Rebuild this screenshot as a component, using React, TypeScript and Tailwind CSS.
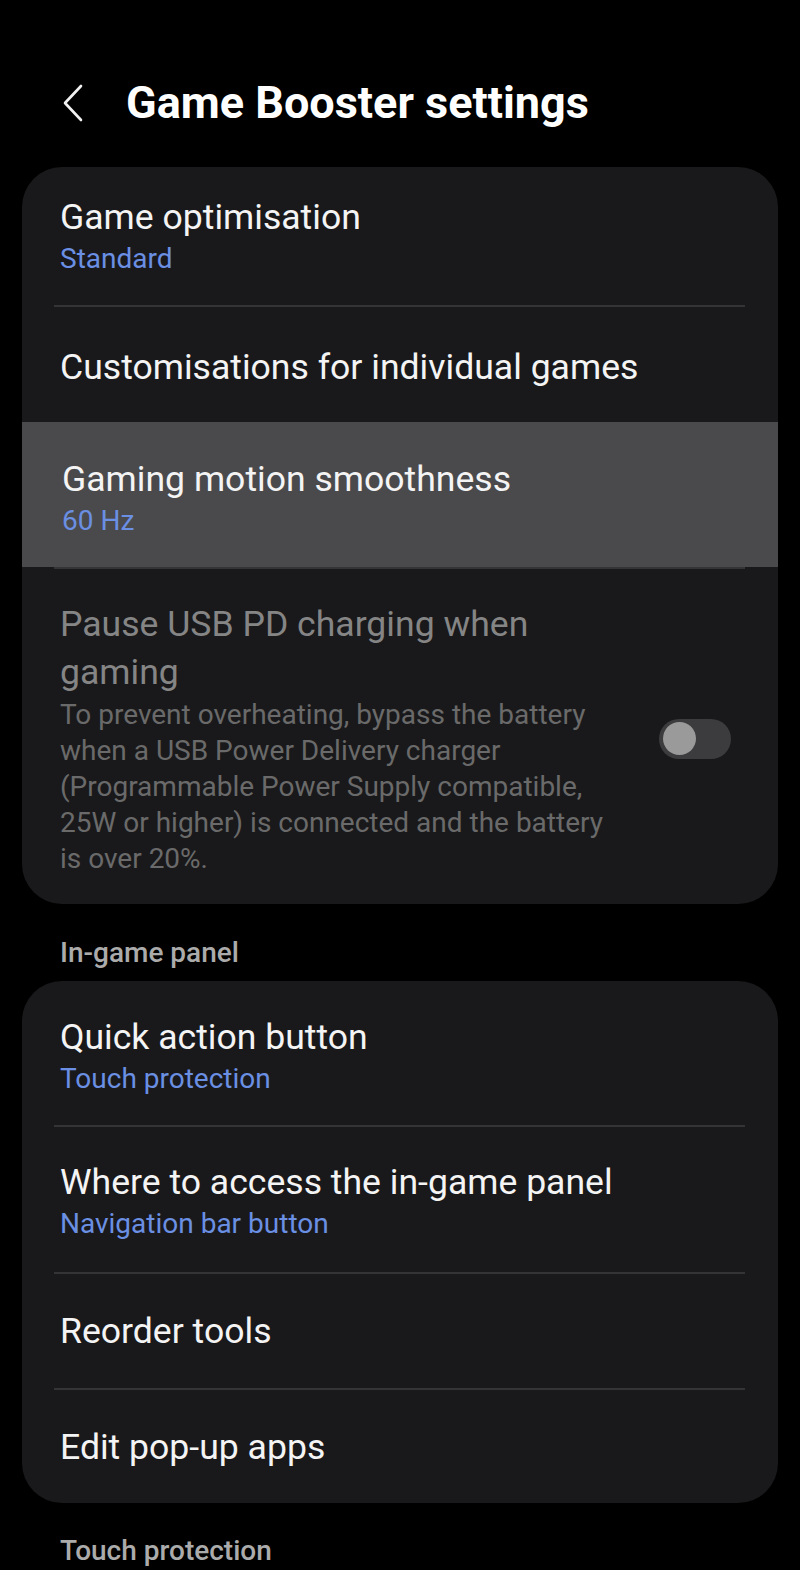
import React from "react";

type RowProps = {
  title: string;
  sub?: string;
  pt: string;
  pb: string;
  highlight?: boolean;
};

const Row = ({ title, sub, pt, pb, highlight }: RowProps) => {
  return (
    <div className={`${pt} ${pb} ${highlight ? "bg-[#4a4a4c] pl-[40px]" : "pl-[38px]"} pr-[38px]`}>
      <div className="text-[35.6px] leading-[40px] text-[#f4f4f4]">{title}</div>
      {sub && <div className="mt-[4px] text-[28px] leading-[36px] text-[#6a8fe3]">{sub}</div>}
    </div>
  );
};

const Divider = () => <div className="mx-[32px] mr-[33px] h-[2px] bg-[#343436]" />;

const Toggle = () => {
  return (
    <div className="flex h-[40px] w-[72px] shrink-0 items-center rounded-full bg-[#3c3c3e] pl-[4px]">
      <div className="h-[33px] w-[33px] rounded-full bg-[#9a9a9a]" />
    </div>
  );
};

const SectionLabel = ({ children, className }: { children: React.ReactNode; className: string }) => {
  return (
    <div className={`pl-[60px] text-[28px] font-medium leading-[36px] text-[#ababab] ${className}`}>
      {children}
    </div>
  );
};

export default function App() {
  return (
    <div className="h-[1570px] overflow-hidden bg-black font-['Roboto',sans-serif]">
      {/* Header */}
      <div className="flex items-center pb-[39px] pt-[78px]">
        <svg className="ml-[62px]" width="22" height="38" viewBox="0 0 22 38" fill="none">
          <path d="M19 2 L3 19 L19 36" stroke="#f2f2f2" strokeWidth="2.6" strokeLinecap="round" strokeLinejoin="round" />
        </svg>
        <h1 className="ml-[42px] text-[45px] font-bold leading-[50px] text-white">Game Booster settings</h1>
      </div>

      {/* Card 1 */}
      <div className="mx-[22px] overflow-hidden rounded-[40px] bg-[#19191b]">
        <Row title="Game optimisation" sub="Standard" pt="pt-[30px]" pb="pb-[28px]" />
        <Divider />
        <Row title="Customisations for individual games" pt="pt-[40px]" pb="pb-[35px]" />
        <Row title="Gaming motion smoothness" sub="60 Hz" pt="pt-[37px]" pb="pb-[28px]" highlight />
        <Divider />
        <div className="flex items-center pb-[27px] pl-[38px] pr-[47px] pt-[31px]">
          <div className="flex-1">
            <div className="text-[35.6px] leading-[48px] text-[#858585]">
              Pause USB PD charging when
              <br />
              gaming
            </div>
            <div className="mt-[1px] text-[28px] leading-[36px] text-[#6a6a6a]">
              To prevent overheating, bypass the battery
              <br />
              when a USB Power Delivery charger
              <br />
              (Programmable Power Supply compatible,
              <br />
              25W or higher) is connected and the battery
              <br />
              is over 20%.
            </div>
          </div>
          <Toggle />
        </div>
      </div>

      <SectionLabel className="mb-[10px] mt-[31px]">In-game panel</SectionLabel>

      {/* Card 2 */}
      <div className="mx-[22px] overflow-hidden rounded-[40px] bg-[#19191b]">
        <Row title="Quick action button" sub="Touch protection" pt="pt-[36px]" pb="pb-[28px]" />
        <Divider />
        <Row title="Where to access the in-game panel" sub="Navigation bar button" pt="pt-[35px]" pb="pb-[30px]" />
        <Divider />
        <Row title="Reorder tools" pt="pt-[37px]" pb="pb-[37px]" />
        <Divider />
        <Row title="Edit pop-up apps" pt="pt-[37px]" pb="pb-[36px]" />
      </div>

      <SectionLabel className="mt-[30px]">Touch protection</SectionLabel>
    </div>
  );
}
